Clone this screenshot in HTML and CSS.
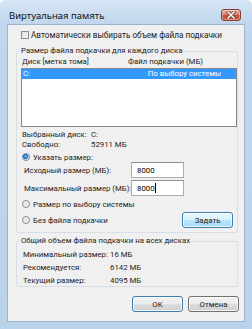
FILE: index.html
```html
<!DOCTYPE html>
<html lang="ru">
<head>
<meta charset="utf-8">
<title>Виртуальная память</title>
<link rel="stylesheet" href="styles.css">
</head>
<body>
<div class="window">
  <div class="titlebar">
    <span class="title">Виртуальная память</span>
    <span class="close"><svg width="10" height="8" viewBox="0 0 10 8"><path d="M2 1 L8 7 M8 1 L2 7" stroke="#5a2a22" stroke-width="3" stroke-linecap="square"/><path d="M2 1 L8 7 M8 1 L2 7" stroke="#ffffff" stroke-width="1.6" stroke-linecap="square"/></svg></span>
  </div>
  <div class="client">
    <div class="check-row"><span class="checkbox"></span><span>Автоматически выбирать объем файла подкачки</span></div>
    <fieldset class="group group-disks">
      <legend>Размер файла подкачки для каждого диска</legend>
      <div class="cols"><span class="col1">Диск [метка тома]</span><span>Файл подкачки (МБ)</span></div>
      <div class="listbox">
        <div class="item selected"><span>C:</span><span>По выбору системы</span></div>
      </div>
      <div class="info">
        <span>Выбранный диск:</span><span>C:</span>
        <span>Свободно:</span><span>52911 МБ</span>
      </div>
      <div class="radio-row first"><span class="radio on"></span><span>Указать размер:</span></div>
      <div class="field-row"><span>Исходный размер (МБ):</span><span class="input">8000</span></div>
      <div class="field-row second"><span>Максимальный размер (МБ):</span><span class="input">8000<span class="caret"></span></span></div>
      <div class="radio-row"><span class="radio"></span><span>Размер по выбору системы</span></div>
      <div class="radio-row last"><span class="radio"></span><span class="grow">Без файла подкачки</span><span class="btn btn-hot">Задать</span></div>
    </fieldset>
    <fieldset class="group group-total">
      <legend>Общий объем файла подкачки на всех дисках</legend>
      <div class="totals">
        <span>Минимальный размер:</span><span>16 МБ</span>
        <span>Рекомендуется:</span><span>6142 МБ</span>
        <span>Текущий размер:</span><span>4095 МБ</span>
      </div>
    </fieldset>
    <div class="buttons"><span class="btn btn-ok">OK</span><span class="btn">Отмена</span></div>
  </div>
</div>
</body>
</html>
```
FILE: styles.css
```css
* { box-sizing: border-box; }
html, body { margin: 0; padding: 0; }
body {
  width: 252px;
  height: 329px;
  overflow: hidden;
  font-family: Roboto, "Noto Sans", "Liberation Sans", Arial, sans-serif;
  font-size: 7.8px;
  color: #1e1e1e;
  background: #ffffff;
  white-space: nowrap;
}
.window {
  width: 252px;
  height: 329px;
  display: flex;
  flex-direction: column;
  padding: 0 7px 7px 7px;
  background: linear-gradient(to bottom, #d6e5f4 0px, #c0d6ed 24px, #bad2ea 100%);
  border-radius: 5px 5px 0 0;
}
.titlebar {
  height: 24px;
  display: flex;
  align-items: flex-start;
  justify-content: space-between;
  flex: none;
}
.title {
  font-family: "Noto Sans", Roboto, sans-serif;
  font-size: 9.5px;
  color: #111;
  margin: 10px 0 0 2px;
  line-height: 12px;
}
.close {
  width: 20px;
  height: 12px;
  margin: 9px 4px 0 0;
  border: 1px solid #8a3b30;
  border-radius: 3px;
  background: linear-gradient(to bottom, #eab1a3 0%, #d9806c 45%, #c64a34 55%, #d1634c 100%);
  display: flex;
  align-items: center;
  justify-content: center;
  box-shadow: inset 0 0 0 1px rgba(255,255,255,0.35);
}
.close svg { display: block; }
.client {
  flex: 1;
  background: #f0f0f0;
  border: 1px solid #9eb4cb;
  padding: 0 6px 0 8px;
  display: flex;
  flex-direction: column;
}
.check-row {
  display: flex;
  align-items: center;
  height: 12px;
  margin: 4px 0 0 5px;
  gap: 2px;
  font-size: 8.2px;
}
.checkbox {
  width: 8px;
  height: 8px;
  border: 1px solid #8e8f8f;
  background: linear-gradient(135deg, #dcdcdc, #fbfbfb);
  flex: none;
}
.group {
  margin: 0;
  border: 1px solid #d5dfe5;
  border-radius: 2px;
  min-width: 0;
}
.group legend {
  padding: 0 1px;
  margin-left: -1px;
  line-height: 12px;
}
.group-disks {
  margin-top: 4px;
  padding: 0 0 4px 4px;
}
.cols {
  display: flex;
  height: 10px;
  line-height: 10px;
  padding-left: 1px;
}
.col1 { width: 106px; }
.listbox {
  margin-top: 1px;
  height: 59px;
  border: 1px solid #828790;
  background: #ffffff;
}
.item {
  height: 10px;
  line-height: 10px;
  display: flex;
  justify-content: space-between;
  padding: 0 15px 0 1px;
}
.item.selected { background: #3399ff; color: #ffffff; }
.info {
  display: grid;
  grid-template-columns: 69px auto;
  line-height: 10px;
  margin-top: 3px;
  padding-left: 1px;
}
.radio-row {
  display: flex;
  align-items: center;
  height: 10px;
  gap: 3px;
  padding-left: 1px;
}
.radio-row.first { margin-top: 2px; }
.radio-row.last { height: 16px; margin-top: 3px; }
.grow { flex: 1; }
.radio {
  width: 8px;
  height: 8px;
  border-radius: 50%;
  border: 1px solid #8c8c8c;
  background: radial-gradient(circle at 50% 50%, #e2e2e2 0, #f7f7f7 100%);
  flex: none;
}
.radio.on {
  border-color: #6a86a4;
  background: radial-gradient(circle at 45% 40%, #8fd0ff 0, #2b7fd0 1.6px, #1b5aa0 2.4px, #dfe8f0 2.6px, #f5f5f5 100%);
}
.field-row {
  display: flex;
  align-items: center;
  height: 16px;
  padding-left: 3px;
}
.field-row > span:first-child { width: 107px; }
.field-row.second { margin-top: 2px; margin-bottom: 3px; }
.input {
  width: 53px;
  height: 16px;
  border: 1px solid #abadb3;
  border-top-color: #8e9096;
  background: #ffffff;
  padding-left: 5px;
  display: flex;
  align-items: center;
  color: #000;
}
.caret {
  width: 1px;
  height: 10px;
  background: #000;
}
.btn {
  display: flex;
  align-items: center;
  justify-content: center;
  width: 51px;
  height: 16px;
  border: 1px solid #707070;
  border-radius: 3px;
  background: linear-gradient(to bottom, #f2f2f2 0%, #ebebeb 50%, #dddddd 50%, #cfcfcf 100%);
  box-shadow: inset 0 0 0 1px rgba(255,255,255,0.75);
  color: #1e1e1e;
}
.btn-hot {
  margin-right: 4px;
  border-color: #3c7fb1;
  background: linear-gradient(to bottom, #eaf6fd 0%, #d9f0fc 50%, #bee6fd 50%, #a7d9f5 100%);
}
.btn-ok { border-color: #3c7fb1; }
.group-total {
  margin-top: 2px;
  padding: 0 0 6px 6px;
  height: 52px;
}
.group-total legend { margin-left: -3px; }
.totals {
  display: grid;
  grid-template-columns: 87px auto;
  line-height: 13px;
  margin-top: 1px;
}
.buttons {
  display: flex;
  justify-content: flex-end;
  gap: 5px;
  margin-top: 9px;
  margin-right: -1px;
}
```
